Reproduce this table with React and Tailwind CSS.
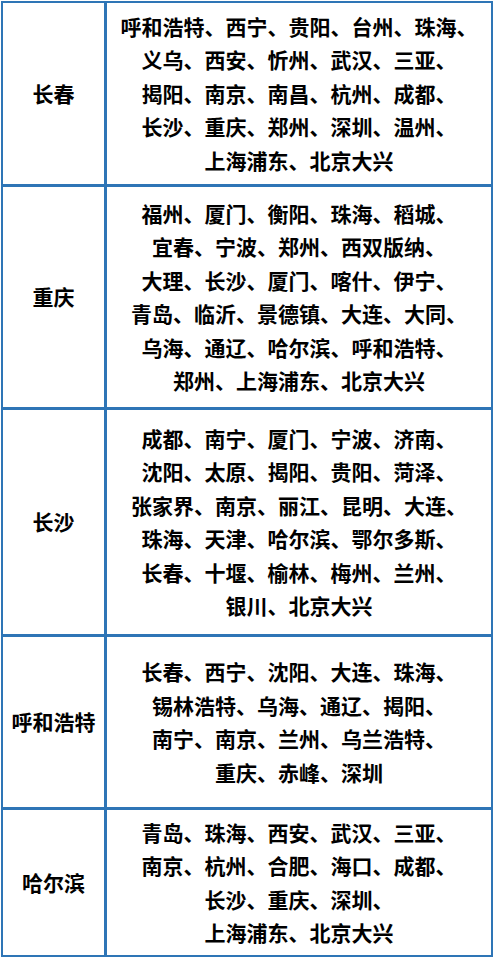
const rows = [
  {
    name: "长春",
    h: "h-[181px]",
    lines: [
      "呼和浩特、西宁、贵阳、台州、珠海、",
      "义乌、西安、忻州、武汉、三亚、",
      "揭阳、南京、南昌、杭州、成都、",
      "长沙、重庆、郑州、深圳、温州、",
      "上海浦东、北京大兴",
    ],
  },
  {
    name: "重庆",
    h: "h-[223px]",
    lines: [
      "福州、厦门、衡阳、珠海、稻城、",
      "宜春、宁波、郑州、西双版纳、",
      "大理、长沙、厦门、喀什、伊宁、",
      "青岛、临沂、景德镇、大连、大同、",
      "乌海、通辽、哈尔滨、呼和浩特、",
      "郑州、上海浦东、北京大兴",
    ],
  },
  {
    name: "长沙",
    h: "h-[227px]",
    lines: [
      "成都、南宁、厦门、宁波、济南、",
      "沈阳、太原、揭阳、贵阳、菏泽、",
      "张家界、南京、丽江、昆明、大连、",
      "珠海、天津、哈尔滨、鄂尔多斯、",
      "长春、十堰、榆林、梅州、兰州、",
      "银川、北京大兴",
    ],
  },
  {
    name: "呼和浩特",
    h: "h-[173px]",
    lines: [
      "长春、西宁、沈阳、大连、珠海、",
      "锡林浩特、乌海、通辽、揭阳、",
      "南宁、南京、兰州、乌兰浩特、",
      "重庆、赤峰、深圳",
    ],
  },
  {
    name: "哈尔滨",
    h: "h-[148px]",
    lines: [
      "青岛、珠海、西安、武汉、三亚、",
      "南京、杭州、合肥、海口、成都、",
      "长沙、重庆、深圳、",
      "上海浦东、北京大兴",
    ],
  },
];

export default function App() {
  return (
    <div className="w-[494px] h-[957px] bg-white pt-[1px] pl-[1px]">
      <div
        className="w-[492px] border-2 border-[#2e75b6] flex flex-col text-black font-bold text-[21px] leading-[33.5px]"
        style={{ fontFamily: '"Noto Sans CJK SC", "Noto Sans", sans-serif' }}
      >
        {rows.map((r, i) => (
          <div
            key={i}
            className={`flex ${r.h} ${i > 0 ? "border-t-[3px] border-[#2e75b6]" : ""}`}
          >
            <div className="w-[104px] shrink-0 flex items-center justify-center border-r-[3px] border-[#2e75b6]">
              {r.name}
            </div>
            <div className="flex-1 flex flex-col items-center justify-center text-center">
              {r.lines.map((l, j) => (
                <div key={j} className="whitespace-nowrap">
                  {l}
                </div>
              ))}
            </div>
          </div>
        ))}
      </div>
    </div>
  );
}
